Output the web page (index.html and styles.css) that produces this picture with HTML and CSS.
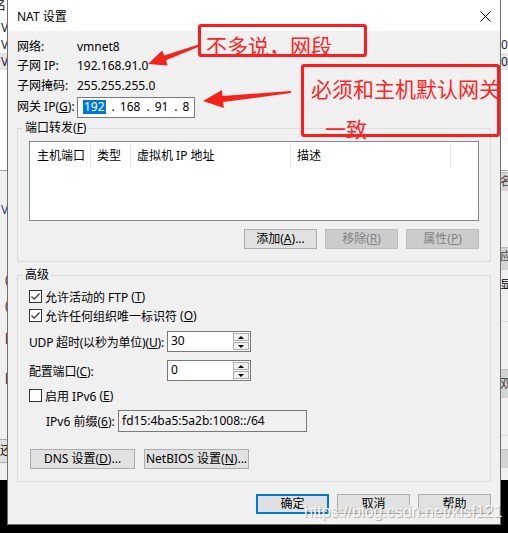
FILE: index.html
```html
<!DOCTYPE html>
<html lang="zh-CN">
<head>
	<meta charset="UTF-8">
	<title>NAT 设置</title>
	<link rel="stylesheet" href="styles.css">
</head>
<body>
<div class="desk">
	<!-- 后面的窗口 -->
	<div class="bgwin">
		<div class="bgcol bgleft">
			<div class="bgtop">
				<div class="frag">名</div>
				<div class="brow">V</div>
				<div class="brow">V</div>
				<div class="brow on">V</div>
			</div>
			<div class="bmark v">V</div>
			<div class="bmark m1">(</div>
			<div class="bmark m2">(</div>
			<div class="bmark m3">[</div>
			<div class="bmark m4">[</div>
			<div class="bbtn">还</div>
		</div>
		<div class="bgcol bgright">
			<div class="bgtop">
				<div class="frag"></div>
				<div class="brow"></div>
				<div class="brow">0</div>
				<div class="brow on">0</div>
			</div>
			<div class="gbox g1">名</div>
			<div class="gbox g2">应</div>
			<div class="gtxt">显</div>
			<div class="gline l1"></div>
			<div class="gbox g3">双</div>
			<div class="gline l2"></div>
			<div class="gbox g4"></div>
		</div>
	</div>

	<!-- NAT 设置对话框 -->
	<div class="dlg">
		<div class="titlebar">
			<span>NAT 设置</span>
			<svg class="close" width="11" height="11" viewBox="0 0 11 11"><path d="M0.5 0.5 L10.5 10.5 M10.5 0.5 L0.5 10.5" stroke="#000" stroke-width="1" fill="none"/></svg>
		</div>
		<div class="main">
			<div class="info">
				<span>网络:</span><span>vmnet8</span>
				<span>子网 IP:</span><span>192.168.91.0</span>
				<span>子网掩码:</span><span>255.255.255.0</span>
				<span>网关 IP<span class="acc">(<u>G</u>)</span>:</span>
				<div class="ipbox"><span class="sel">192</span><span class="dot">.</span>168<span class="dot">.</span>91<span class="dot">.</span>8</div>
			</div>

			<fieldset class="grp">
				<legend>端口转发<span class="acc">(<u>F</u>)</span></legend>
				<div class="list">
					<div class="lhead">
						<span class="c1">主机端口</span>
						<span class="c2">类型</span>
						<span class="c3">虚拟机 IP 地址</span>
						<span class="c4">描述</span>
					</div>
				</div>
				<div class="btnrow">
					<span class="btn">添加<span class="acc">(<u>A</u>)</span>...</span>
					<span class="btn off">移除<span class="acc">(<u>R</u>)</span></span>
					<span class="btn off">属性<span class="acc">(<u>P</u>)</span></span>
				</div>
			</fieldset>

			<fieldset class="grp adv">
				<legend>高级</legend>
				<div class="chk"><span class="box"><svg width="11" height="11" viewBox="0 0 11 11"><path d="M1.5 5.5 L4.2 8.2 L9.5 2.5" stroke="#333" stroke-width="1.2" fill="none"/></svg></span>允许活动的 FTP<span class="acc">(<u>T</u>)</span></div>
				<div class="chk"><span class="box"><svg width="11" height="11" viewBox="0 0 11 11"><path d="M1.5 5.5 L4.2 8.2 L9.5 2.5" stroke="#333" stroke-width="1.2" fill="none"/></svg></span>允许任何组织唯一标识符<span class="acc">(<u>O</u>)</span></div>
				<div class="frow udp">
					<span class="flab">UDP 超时(以秒为单位)<span class="acc">(<u>U</u>)</span>:</span>
					<div class="spin"><span class="val">30</span><span class="arr"><span class="ab up"></span><span class="ab dn"></span></span></div>
				</div>
				<div class="frow port">
					<span class="flab">配置端口<span class="acc">(<u>C</u>)</span>:</span>
					<div class="spin"><span class="val">0</span><span class="arr"><span class="ab up"></span><span class="ab dn"></span></span></div>
				</div>
				<div class="chk v6"><span class="box"></span>启用 IPv6<span class="acc">(<u>E</u>)</span></div>
				<div class="frow pre">
					<span class="plab">IPv6 前缀<span class="acc">(<u>6</u>)</span>:</span>
					<div class="txt">fd15:4ba5:5a2b:1008::/64</div>
				</div>
				<div class="btnrow left">
					<span class="btn wide">DNS 设置<span class="acc">(<u>D</u>)</span>...</span>
					<span class="btn wide">NetBIOS 设置<span class="acc">(<u>N</u>)</span>...</span>
				</div>
			</fieldset>

			<div class="actions">
				<span class="btn ok">确定</span>
				<span class="btn">取消</span>
				<span class="btn">帮助</span>
			</div>
		</div>
	</div>

	<!-- 标注 -->
	<div class="note n1">不多说，网段</div>
	<div class="note n2">必须和主机默认网关<br><span class="ind">一致</span></div>
	<svg class="arrows" width="508" height="533" viewBox="0 0 508 533">
		<polygon points="148,64 162.3,50.4 164.2,55.5 198.7,44.6 199.3,46.4 165.9,60.3 167.7,65.4" fill="#f5221b"/>
		<polygon points="203,101 222,90.1 222.6,96 290.9,91 291.1,93 223.2,102 223.8,107.9" fill="#f5221b"/>
	</svg>
	<div class="wm">https://blog.csdn.net/kisf121</div>
</div>
</body>
</html>
```

FILE: styles.css
```css
body{margin:0;background:#000;}
.desk{width:508px;height:533px;position:relative;overflow:hidden;background:#000;font:12px "Noto Sans","Noto Sans CJK SC",sans-serif;color:#000;text-autospace:no-autospace;}
.acc{font-family:"Noto Sans",sans-serif;}

/* background window */
.bgwin{height:480px;display:flex;justify-content:space-between;background:#f0f0f0;}
.bgcol{overflow:hidden;position:relative;}
.bgleft{width:7px;}
.bgright{width:8px;}
.bgtop{height:170px;background:#fff;border-bottom:1px solid #a0a0a0;}
.frag{height:19px;line-height:12px;margin-left:-6px;overflow:hidden;}
.brow{height:17px;line-height:17px;padding-left:1px;color:#1b1b3a;}
.brow.on{background:#e5e5e5;}
.bmark{line-height:14px;padding-left:5px;color:#333;}
.bmark.v{margin-top:32px;padding-left:1px;color:#1c3b8a;}
.bmark.m1{margin-top:56px;}
.bmark.m2{margin-top:12px;}
.bmark.m3{margin-top:18px;}
.bmark.m4{margin-top:26px;}
.bbtn{margin-top:54px;height:22px;line-height:22px;background:#e1e1e1;border-top:1px solid #adadad;border-bottom:1px solid #adadad;}
.gbox{background:#d4d4d4;color:#444;line-height:18px;height:18px;border-top:1px solid #bdbdbd;}
.g1{margin-top:1px;}
.g2{margin-top:56px;height:22px;}
.gtxt{margin-top:6px;line-height:18px;}
.gline{height:1px;background:#d9d9d9;}
.l1{margin-top:27px;}
.g3{margin-top:47px;height:28px;line-height:28px;}
.l2{margin-top:37px;}
.g4{margin-top:13px;}

/* dialog */
.dlg{position:absolute;left:7px;top:0;width:494px;height:525px;box-sizing:border-box;border:1px solid #6e6e6e;border-top:none;background:#f0f0f0;}
.titlebar{height:31px;background:#fff;display:flex;align-items:center;justify-content:space-between;padding:0 9px;}
.close{margin-top:1px;}
.main{padding:6px 9px 0;}
.info{display:grid;grid-template-columns:60px 1fr;grid-template-rows:19px 19px 21px 22px;align-items:center;line-height:16px;white-space:nowrap;}
.ipbox{width:118px;height:21px;box-sizing:border-box;border:1px solid #7a7a7a;background:#fff;display:flex;align-items:center;padding-left:5px;line-height:14px;}
.sel{background:#0078d7;color:#fff;padding:0 1px;}
.dot{margin:0 5px 0 6px;}

.grp{border:1px solid #dcdcdc;margin:2px 0 0;padding:5px 11px 12px;min-width:0;}
.grp legend{margin-left:-6px;padding:0 2px;line-height:16px;}
.grp.adv{margin-top:5px;padding-top:4px;}

.list{height:80px;box-sizing:border-box;border:1px solid #828790;background:#fff;}
.lhead{display:flex;height:26px;}
.lhead span{box-sizing:border-box;height:25px;margin-top:1px;line-height:25px;padding-left:6px;border-right:1px solid #e5e5e5;white-space:nowrap;}
.lhead .c1{width:61px;padding-left:7px;}
.lhead .c2{width:40px;}
.lhead .c3{width:160px;}
.lhead .c4{width:160px;}

.btnrow{display:flex;justify-content:flex-end;gap:8px;margin-top:8px;}
.btnrow.left{justify-content:flex-start;gap:9px;margin-top:17px;padding-left:1px;}
.btn{width:73px;height:20px;box-sizing:border-box;border:1px solid #adadad;background:#e1e1e1;text-align:center;line-height:18px;white-space:nowrap;}
.btn.off{background:#cccccc;border-color:#bfbfbf;color:#838383;}
.btn.wide{width:105px;}

.chk{display:flex;align-items:center;height:19px;gap:3px;white-space:nowrap;}
.box{width:13px;height:13px;box-sizing:border-box;border:1px solid #333;background:#fff;display:flex;align-items:center;justify-content:center;}
.chk.v6{margin-top:5px;}

.frow{display:flex;align-items:center;}
.frow.udp{margin-top:6px;}
.frow.port{margin-top:8px;}
.frow.pre{margin-top:5px;}
.flab{width:138px;flex-shrink:0;white-space:nowrap;letter-spacing:-0.2px;}
.plab{width:72px;flex-shrink:0;padding-left:17px;white-space:nowrap;}
.spin{width:84px;height:21px;flex-shrink:0;box-sizing:border-box;border:1px solid #7a7a7a;background:#fff;display:flex;}
.spin .val{flex:1;padding-left:3px;line-height:18px;}
.spin .arr{width:16px;display:flex;flex-direction:column;gap:1px;padding:1px 1px 1px 0;}
.ab{flex:1;border:1px solid #adadad;background:#f0f0f0;display:flex;align-items:center;justify-content:center;}
.ab.up::after{content:"";border-left:3px solid transparent;border-right:3px solid transparent;border-bottom:3px solid #000;}
.ab.dn::after{content:"";border-left:3px solid transparent;border-right:3px solid transparent;border-top:3px solid #000;}
.txt{width:189px;height:22px;flex-shrink:0;box-sizing:border-box;border:1px solid #7a7a7a;padding-left:3px;line-height:19px;}

.actions{display:flex;justify-content:flex-end;gap:8px;margin-top:12px;}
.actions .btn{width:73px;}
.btn.ok{border:2px solid #0078d7;line-height:16px;}

/* annotations */
.note{position:absolute;box-sizing:border-box;border:3px solid #ff1c1c;border-radius:3px;color:#ff2424;font:21px "Noto Sans CJK SC",sans-serif;white-space:nowrap;}
.n1{left:198px;top:24px;width:169px;height:33px;padding:6px 0 0 5px;line-height:24px;}
.n2{left:301px;top:64px;width:199px;height:73px;padding:1px 0 0 7px;line-height:40px;}
.n2 .ind{margin-left:14px;}
.arrows{position:absolute;left:0;top:0;pointer-events:none;}
.wm{position:absolute;left:304px;top:503px;font:16px "Liberation Sans",sans-serif;color:#f6f6f6;text-shadow:1px 1px 1px rgba(0,0,0,.3);white-space:nowrap;}
```
